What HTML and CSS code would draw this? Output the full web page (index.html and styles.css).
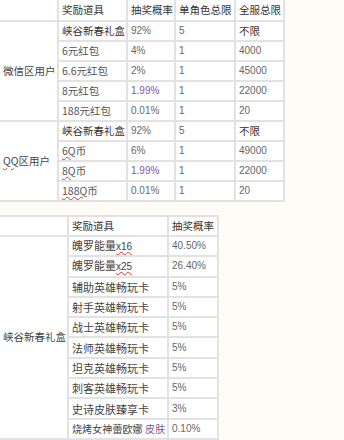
FILE: index.html
```html
<!DOCTYPE html>
<html lang="zh-CN">
<head>
<meta charset="utf-8">
<link rel="stylesheet" href="styles.css">
</head>
<body>
<div class="page">
<table class="tbl t1">
<colgroup><col class="c1"><col class="c2"><col class="c3"><col class="c4"><col class="c5"></colgroup>
<tr class="head"><th class="first"></th><th>奖励道具</th><th>抽奖概率</th><th>单角色总限</th><th>全服总限</th></tr>
<tr><td rowspan="5" class="first grp">微信区用户</td><td class="dk">峡谷新春礼盒</td><td class="num">92%</td><td class="num">5</td><td class="dk">不限</td></tr>
<tr><td>6元红包</td><td class="num">4%</td><td class="num">1</td><td class="num">4000</td></tr>
<tr><td>6.6元红包</td><td class="num">2%</td><td class="num">1</td><td class="num">45000</td></tr>
<tr><td>8元红包</td><td class="num pur">1.99%</td><td class="num">1</td><td class="num">22000</td></tr>
<tr><td>188元红包</td><td class="num">0.01%</td><td class="num">1</td><td class="num">20</td></tr>
<tr><td rowspan="4" class="first grp"><span class="sq">QQ</span>区用户</td><td class="dk">峡谷新春礼盒</td><td class="num">92%</td><td class="num">5</td><td class="dk">不限</td></tr>
<tr><td><span class="sq">6Q</span>币</td><td class="num">6%</td><td class="num">1</td><td class="num">49000</td></tr>
<tr><td><span class="sq">8Q</span>币</td><td class="num pur">1.99%</td><td class="num">1</td><td class="num">22000</td></tr>
<tr><td><span class="sq">188Q</span>币</td><td class="num">0.01%</td><td class="num">1</td><td class="num">20</td></tr>
</table>

<table class="tbl t2">
<colgroup><col class="d1"><col class="d2"><col class="d3"></colgroup>
<tr class="head"><th class="first"></th><th>奖励道具</th><th>抽奖概率</th></tr>
<tr><td rowspan="10" class="first grp">峡谷新春礼盒</td><td class="item">魄罗能量<span class="sq x">x16</span></td><td class="num">40.50%</td></tr>
<tr><td class="item">魄罗能量<span class="sq x">x25</span></td><td class="num">26.40%</td></tr>
<tr><td class="item">辅助英雄畅玩卡</td><td class="num">5%</td></tr>
<tr><td class="item">射手英雄畅玩卡</td><td class="num">5%</td></tr>
<tr><td class="item">战士英雄畅玩卡</td><td class="num">5%</td></tr>
<tr><td class="item">法师英雄畅玩卡</td><td class="num">5%</td></tr>
<tr><td class="item">坦克英雄畅玩卡</td><td class="num">5%</td></tr>
<tr><td class="item">刺客英雄畅玩卡</td><td class="num">5%</td></tr>
<tr><td class="item">史诗皮肤臻享卡</td><td class="num">3%</td></tr>
<tr><td class="item last">烧烤女神蕾欧娜 <span class="pur">皮肤</span></td><td class="num">0.10%</td></tr>
</table>
</div>
</body>
</html>
```

FILE: styles.css
```css
html, body {
  margin: 0;
  padding: 0;
  background: #fdfcf7;
}
.page {
  width: 344px;
  height: 440px;
  overflow: hidden;
  font-family: "Noto Sans CJK SC", "Noto Sans", sans-serif;
  font-size: 10.5px;
  color: #555;
}
.tbl {
  border-collapse: collapse;
  table-layout: fixed;
  background: #fff;
}
.tbl th, .tbl td {
  border: 2px solid #e2e2e2;
  padding: 0 0 0 3px;
  text-align: left;
  font-weight: normal;
  white-space: nowrap;
  overflow: hidden;
  line-height: 12px;
  vertical-align: middle;
  box-sizing: border-box;
}
.tbl th { color: #333; }
.tbl .first { border-left: 0; }
.t1 { width: 284px; }
.t1 .head th { border-top: 0; height: 21px; }
.t1 td { height: 20px; }
.c1 { width: 58px; }
.c2 { width: 69px; }
.c3 { width: 48px; }
.c4 { width: 60px; }
.c5 { width: 49px; }
.grp { color: #444; padding-left: 4px; }
.t2 { width: 218px; margin-top: 13px; }
.t2 th { height: 20px; }
.t2 td { height: 20.3px; }
.d1 { width: 68px; }
.d2 { width: 100px; }
.d3 { width: 50px; }
.t2 .item { font-size: 11px; color: #444; }
.t2 .item.last { font-size: 10px; letter-spacing: 0.1px; }
.dk { color: #333; }
.num {
  font-family: "Liberation Sans Narrow", "Liberation Sans", sans-serif;
  font-size: 10px;
  color: #666;
}
.pur { color: #7a5a9c; }
.sq {
  text-decoration: underline wavy #e03030;
  text-decoration-thickness: 1px;
  text-underline-offset: 1px;
}
.x {
  font-family: "Liberation Sans", sans-serif;
  font-size: 10px;
}
```
